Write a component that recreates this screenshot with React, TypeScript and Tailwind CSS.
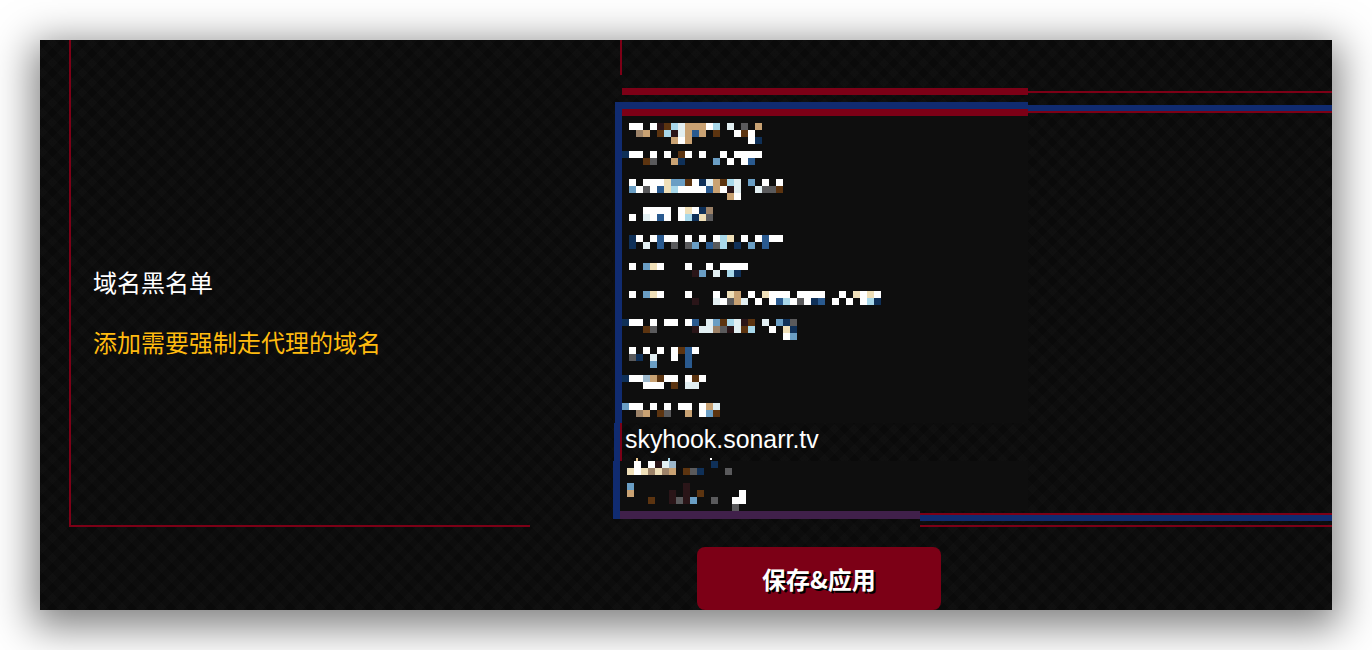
import type { ReactNode } from "react";

const PALETTE: Record<string, string> = {
  W: "#ffffff",
  t: "#c9a273",
  s: "#9c8268",
  o: "#5c3410",
  r: "#2a1518",
  l: "#a8d8ea",
  p: "#e2eff2",
  m: "#6a9ec4",
  M: "#9db8cc",
  d: "#2a5a8f",
  n: "#0f3058",
  g: "#5a5a5c",
  c: "#efdfb8",
};

// Redaction mosaic: [top offset of the row, colour cells], one 7px cell per character.
const UPPER: [number, string][] = [
  [7, ".WW.WrolptttWl.p.g.t"],
  [14, "..st.olrptdt.o..WoW"],
  [21, ".......tWt........Wn"],
  [35, "nWW.W.W.oW.W..W.WWWW"],
  [42, "...og..tn....m.W.Wd"],
  [63, ".W.WWWcmmoWnptolp.m.W.W"],
  [70, ".mWgWdclWWWWdtWrp..pggo"],
  [77, "...............tW"],
  [91, "...WWWW.WcWns"],
  [98, ".W.pWdW.Wlncg"],
  [119, ".nW.WdWW.W.W.Wlc.W.WdWW"],
  [126, ".n.p.d.g.gm.dgl.n.m.d"],
  [147, ".W.mcW...W..W.WWWW"],
  [154, "..........rm.p.ln"],
  [175, ".W.mcW...W...W.ct.W.cWWW.WWWW..W.cWcW"],
  [182, "..........r..pWgtp.W.WdlWgWnd.W.W.Wln"],
  [203, "nWW.W.WW.Wd.pmolpro.p.mng"],
  [210, "...og.....rppsgrpol..W.cn"],
  [217, ".......................Wm"],
  [231, ".W.W.W.WodW"],
  [238, ".gn.p..W.d"],
  [245, "....m....d"],
  [259, "nWWMtoWW.WoW"],
  [266, "...WWW.o.pp"],
  [287, "mWW.W.W.WW.Wtp"],
  [294, "..st.og..t.Wmo"],
];

const LOWER: [number, string][] = [
  [0, "..W.WrpM.....n"],
  [7, ".cWcscst.ogn...g"],
  [22, ".m.......r"],
  [29, ".t.....r.r.o.....W"],
  [36, "....o..rgrm..g..WW"],
  [43, "................g"],
];

function Mosaic({
  rows,
  width,
  height,
  children,
}: {
  rows: [number, string][];
  width: number;
  height: number;
  children?: ReactNode;
}) {
  return (
    <svg width={width} height={height} className="block shrink-0 overflow-visible" shapeRendering="crispEdges">
      {rows.flatMap(([y, cells]) =>
        cells.split("").map((ch, i) => {
          const fill = PALETTE[ch];
          return fill ? <rect key={`${y}-${i}`} x={i * 7} y={y} width={7} height={7} fill={fill} /> : null;
        }),
      )}
      {children}
    </svg>
  );
}

const TEXTURE =
  "bg-[#0a0a0a] bg-[repeating-linear-gradient(45deg,rgba(255,255,255,0.012)_0_7px,transparent_7px_14px),repeating-linear-gradient(-45deg,rgba(255,255,255,0.012)_0_7px,transparent_7px_14px)]";

export default function App() {
  return (
    <div className="h-[650px] w-[1372px] overflow-hidden bg-white pl-10 pt-10 font-['Liberation_Sans','Noto_Sans_CJK_SC',sans-serif]">
      <div className={`flex h-[570px] w-[1292px] shadow-[0_10px_38px_7px_rgba(0,0,0,0.5)] ${TEXTURE}`}>
        {/* Left: description, framed on two sides */}
        <div className="ml-[29px] flex h-[487px] w-[461px] shrink-0 flex-col justify-center border-b-2 border-l-2 border-[#7c0016] pl-[22px] pt-[58px] font-['Noto_Sans_CJK_SC',sans-serif] text-2xl leading-9">
          <p className="text-white">域名黑名单</p>
          <p className="mt-6 text-[#ffbb0f]">添加需要强制走代理的域名</p>
        </div>

        {/* Right: the list and the button */}
        <div className="ml-[83px] flex w-[719px] shrink-0 flex-col">
          <div className="ml-[7px] h-[35px] w-0.5 bg-[#7c0016]" />

          <div className="ml-[9px] mt-[13px] flex h-[7px]">
            <div className="h-[7px] w-[406px] bg-[#7c0016]" />
            <div className="mt-[3px] h-0.5 flex-1 bg-[#7c0016]" />
          </div>

          <div className="ml-0.5 mt-[7px] flex h-[14px]">
            <div className="w-[413px]">
              <div className="h-[7px] bg-[#102b70]" />
              <div className="flex h-[7px]">
                <div className="w-[7px] bg-[#102b70]" />
                <div className="flex-1 bg-[#7c0016]" />
              </div>
            </div>
            <div className="flex-1 pt-[3px]">
              <div className="h-1.5 bg-[#102b70]" />
              <div className="h-0.5 bg-[#7c0016]" />
            </div>
          </div>

          <div className="flex h-[307px] w-[415px] bg-[#0e0e0e] pl-0.5">
            <div className="w-[7px] shrink-0 bg-[#102b70]" />
            <Mosaic rows={UPPER} width={300} height={307} />
          </div>

          <div className="flex h-[38px] pl-px">
            <div className="w-1.5 shrink-0 bg-[#102b70]" />
            <div className="w-0.5 shrink-0 bg-[#7c0016]" />
            <span className="ml-[3px] text-[24.9px] leading-[32px] text-white">skyhook.sonarr.tv</span>
          </div>

          <div className="flex h-[50px] w-[415px] bg-[#0e0e0e]">
            <div className="w-[7px] shrink-0 bg-[#102b70]" />
            <Mosaic rows={LOWER} width={300} height={50}>
              <rect x={16} y={-3} width={2} height={3} fill="#e8c48a" />
              <rect x={48} y={-3} width={2} height={3} fill="#a8d8ea" />
              <circle cx={91} cy={-2} r={1.5} fill="#ffffff" />
            </Mosaic>
          </div>

          <div className="flex h-[16px]">
            <div className="h-2 w-[7px] shrink-0 bg-[#102b70]" />
            <div className="h-2 w-[300px] shrink-0 bg-[#40204a]" />
            <div className="flex-1 pt-0.5">
              <div className="h-0.5 bg-[#7c0016]" />
              <div className="h-1.5 bg-[#102b70]" />
              <div className="mt-1 h-0.5 bg-[#7c0016]" />
            </div>
          </div>

          <button className="ml-[84px] mt-[20px] h-[63px] w-[244px] shrink-0 rounded-lg bg-[#7c0016] text-2xl font-bold text-white [font-family:'Noto_Sans_CJK_SC',sans-serif] [text-shadow:2px_2px_0_#000]">
            保存&amp;应用
          </button>
        </div>
      </div>
    </div>
  );
}
